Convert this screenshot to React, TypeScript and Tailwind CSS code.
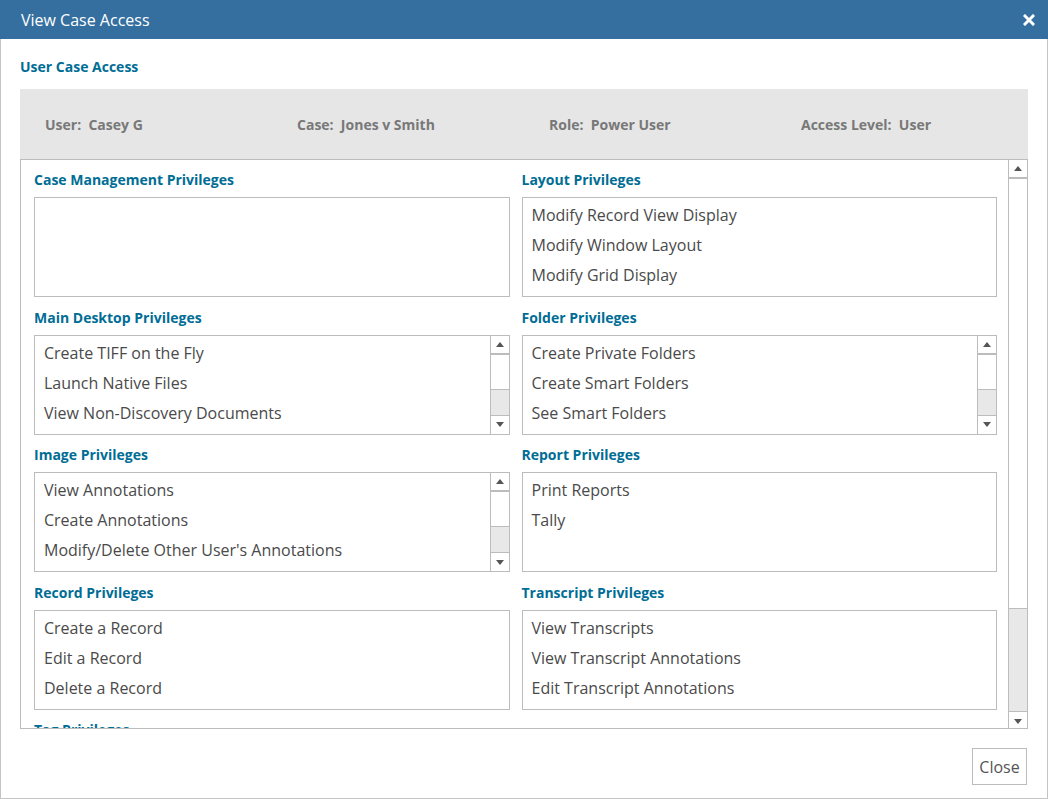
import React from "react";

type Section = { title: string; items: string[]; scroll?: boolean };

const rows: [Section, Section][] = [
  [
    { title: "Case Management Privileges", items: [] },
    {
      title: "Layout Privileges",
      items: ["Modify Record View Display", "Modify Window Layout", "Modify Grid Display"],
    },
  ],
  [
    {
      title: "Main Desktop Privileges",
      items: ["Create TIFF on the Fly", "Launch Native Files", "View Non-Discovery Documents"],
      scroll: true,
    },
    {
      title: "Folder Privileges",
      items: ["Create Private Folders", "Create Smart Folders", "See Smart Folders"],
      scroll: true,
    },
  ],
  [
    {
      title: "Image Privileges",
      items: ["View Annotations", "Create Annotations", "Modify/Delete Other User's Annotations"],
      scroll: true,
    },
    { title: "Report Privileges", items: ["Print Reports", "Tally"] },
  ],
  [
    {
      title: "Record Privileges",
      items: ["Create a Record", "Edit a Record", "Delete a Record"],
    },
    {
      title: "Transcript Privileges",
      items: ["View Transcripts", "View Transcript Annotations", "Edit Transcript Annotations"],
    },
  ],
  [
    { title: "Tag Privileges", items: [] },
    { title: "", items: [] },
  ],
];

function Arrow({ up }: { up?: boolean }) {
  return (
    <svg width="8" height="5" viewBox="0 0 8 5">
      {up ? <polygon points="4,0 8,5 0,5" fill="#555" /> : <polygon points="0,0 8,0 4,5" fill="#555" />}
    </svg>
  );
}

function ScrollBar({ thumb, track }: { thumb: number; track: number }) {
  return (
    <div className="flex w-[18px] shrink-0 flex-col">
      <div className="flex h-[19px] items-center justify-center border-b-2 border-[#bcbcbc] bg-white">
        <Arrow up />
      </div>
      <div className="border-b border-[#bcbcbc] bg-white" style={{ height: thumb }} />
      <div className="bg-[#e8e8e8]" style={{ height: track }} />
      <div className="flex h-[19px] items-center justify-center border-t border-[#bcbcbc] bg-white">
        <Arrow />
      </div>
    </div>
  );
}

function Box({ section }: { section: Section }) {
  return (
    <div className="pb-[11.5px]">
      <div className="h-[17px] text-[14px] font-bold leading-[17px] text-[#006d95]">{section.title}</div>
      <div className="mt-[9px] flex h-[100px] overflow-hidden border border-[#bcbcbc] bg-white">
        <div className="flex-1 pl-[9px] pt-[2px]">
          {section.items.map((it) => (
            <div key={it} className="h-[30px] text-[16px] leading-[30px] text-[#4a4a4a]">
              {it}
            </div>
          ))}
        </div>
        {section.scroll && (
          <div className="border-l border-[#bcbcbc]">
            <ScrollBar thumb={35} track={25} />
          </div>
        )}
      </div>
    </div>
  );
}

export default function App() {
  return (
    <div
      className="flex h-[799px] w-[1048px] flex-col border border-[#c4c4c4] bg-white"
      style={{ fontFamily: '"Open Sans", "Noto Sans", sans-serif' }}
    >
      <div className="-mx-px -mt-px flex h-[39px] shrink-0 items-center justify-between bg-[#346fa0] pl-[21px] pr-[13px]">
        <span className="text-[16px] text-white">View Case Access</span>
        <svg width="12" height="12" viewBox="0 0 12 12">
          <path d="M2 2 L10 10 M10 2 L2 10" stroke="#fff" strokeWidth="3" strokeLinecap="square" />
        </svg>
      </div>

      <div className="flex flex-1 flex-col px-[19px]">
        <div className="pt-[19px] text-[14px] font-bold leading-[17px] text-[#006d95]">User Case Access</div>

        <div className="mt-[14px] grid h-[70px] grid-cols-[repeat(4,252px)] items-center bg-[#e6e6e6] pl-[25px] text-[14px] font-bold text-[#787878]">
          <div>User:&nbsp; Casey G</div>
          <div>Case:&nbsp; Jones v Smith</div>
          <div>Role:&nbsp; Power User</div>
          <div>Access Level:&nbsp; User</div>
        </div>

        <div className="flex h-[570px] overflow-hidden border border-[#bcbcbc]">
          <div className="flex-1 overflow-hidden pl-[13px] pr-[11px] pt-[11px]">
            {rows.map(([a, b], i) => (
              <div key={i} className="grid grid-cols-2 gap-[12px]">
                <Box section={a} />
                {b.title ? <Box section={b} /> : <div />}
              </div>
            ))}
          </div>
          <div className="border-l border-[#bcbcbc]">
            <ScrollBar thumb={430} track={102} />
          </div>
        </div>

        <div className="flex justify-end pr-px pt-[19px]">
          <button className="h-[37px] w-[55px] border border-[#bcbcbc] bg-white text-[16px] text-[#555]">
            Close
          </button>
        </div>
      </div>
    </div>
  );
}
